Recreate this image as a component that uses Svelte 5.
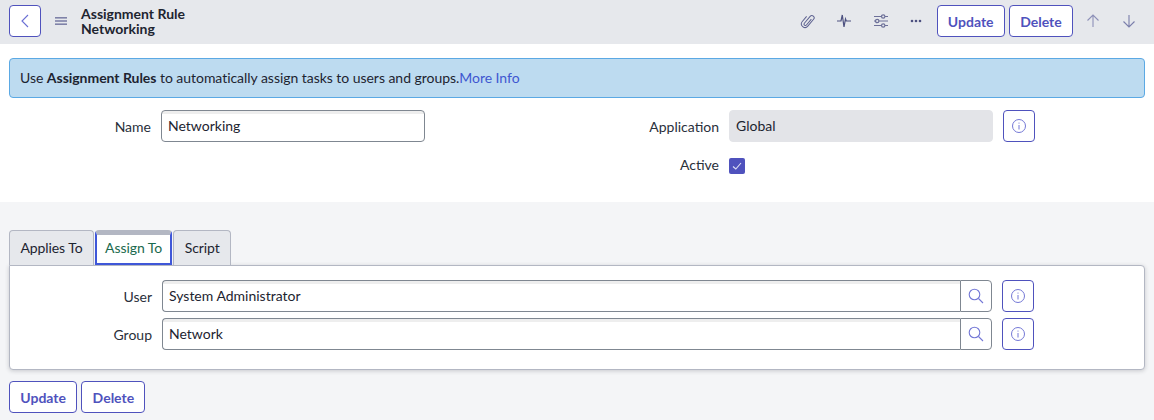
<!--
  Assignment rule form: header bar, info message, top fields, tabbed section, bottom actions.
-->
<script>
  const tabs = ['Applies To', 'Assign To', 'Script'];
  const refs = [
    { label: 'User', value: 'System Administrator' },
    { label: 'Group', value: 'Network' }
  ];
</script>

{#snippet info()}
  <button type="button" class="icon-btn" aria-label="Info">
    <svg width="16" height="16" viewBox="0 0 16 16" fill="none" stroke="#7478d6" stroke-width="1">
      <circle cx="8" cy="8" r="6.5" />
      <path d="M8 7v4.5M8 4.6v1" />
    </svg>
  </button>
{/snippet}

<div class="page">
  <header class="bar">
    <button type="button" class="icon-btn" aria-label="Back">
      <svg width="10" height="14" viewBox="0 0 10 14" fill="none" stroke="#6a6fd4" stroke-width="1.1">
        <path d="M8 1 2 7l6 6" />
      </svg>
    </button>
    <svg class="menu" width="12" height="8" viewBox="0 0 12 8" fill="#7f82a8">
      <rect width="12" height="1.6" /><rect y="3.2" width="12" height="1.6" /><rect y="6.4" width="12" height="1.6" />
    </svg>
    <div class="title">Assignment Rule<br />Networking</div>
    <div class="tools">
      <svg width="16" height="18" viewBox="0 0 16 18" fill="none" stroke="#5d6190" stroke-width="1.1">
        <path transform="rotate(40 8 9) translate(0.8 0.9) scale(0.9)" d="M9.500 5v8.500a1.500 1.500 0 0 1-3 0V3.500a2.500 2.500 0 0 1 5 0v10a4 4 0 0 1-8 0V6" />
      </svg>
      <svg width="16" height="16" viewBox="0 0 16 16" fill="none" stroke="#4d5180" stroke-width="1.2">
        <path d="M1 8h4l1.300-6 1.700 12 1.500-8 .8 2H15" />
      </svg>
      <svg width="16" height="14" viewBox="0 0 16 14" fill="none" stroke="#6d7099" stroke-width="1.2">
        <path d="M1 2.500h7.500M12 2.500h3M1 7h1.500M6 7h9M1 11.500h7.500M12 11.500h3" />
        <circle cx="10.200" cy="2.500" r="1.700" /><circle cx="4.200" cy="7" r="1.700" /><circle cx="10.200" cy="11.500" r="1.700" />
      </svg>
      <svg width="12" height="4" viewBox="0 0 12 4" fill="#4d5180">
        <circle cx="2" cy="2" r="1.300" /><circle cx="6" cy="2" r="1.300" /><circle cx="10" cy="2" r="1.300" />
      </svg>
    </div>
    <button type="button" class="btn">Update</button>
    <button type="button" class="btn">Delete</button>
    <svg class="arrow up" width="14" height="14" viewBox="0 0 14 14" fill="none" stroke="#8d90b8" stroke-width="1.100">
      <path d="M7 13V1M1.500 6.500 7 1l5.500 5.500" />
    </svg>
    <svg class="arrow" width="14" height="14" viewBox="0 0 14 14" fill="none" stroke="#7a7eab" stroke-width="1.100">
      <path d="M7 1v12M1.500 7.500 7 13l5.500-5.500" />
    </svg>
  </header>

  <section class="top">
    <div class="message">
      Use <b>Assignment Rules</b> to automatically assign tasks to users and groups.<a href="#more">More Info</a>
    </div>
    <div class="fields">
      <div class="col">
        <div class="row">
          <span class="label">Name</span>
          <div class="input">Networking</div>
        </div>
      </div>
      <div class="col">
        <div class="row">
          <span class="label">Application</span>
          <div class="input readonly">Global</div>
          {@render info()}
        </div>
        <div class="row check-row">
          <span class="label">Active</span>
          <span class="check">
            <svg width="12" height="12" viewBox="0 0 12 12" fill="none" stroke="#dfe0f5" stroke-width="1.100">
              <path d="M2 6.500 4.800 9 10 3" />
            </svg>
          </span>
        </div>
      </div>
    </div>
  </section>

  <section class="lower">
    <div class="tabs">
      {#each tabs as tab, i}
        <div class="tab" class:active={i === 1}>{tab}</div>
      {/each}
    </div>
    <div class="panel">
      {#each refs as ref}
        <div class="row ref">
          <span class="label">{ref.label}</span>
          <div class="input wide">{ref.value}</div>
          <button type="button" class="search" aria-label="Search">
            <svg width="16" height="16" viewBox="0 0 16 16" fill="none" stroke="#7478d6" stroke-width="1.100">
              <circle cx="6.500" cy="6.500" r="5.300" />
              <path d="m10.500 10.500 4.500 4.500" />
            </svg>
          </button>
          {@render info()}
        </div>
      {/each}
    </div>
    <div class="actions">
      <button type="button" class="btn">Update</button>
      <button type="button" class="btn">Delete</button>
    </div>
  </section>
</div>

<style>
  :global(body) {
    margin: 0;
    background: #f4f5f7;
  }
  .page {
    width: 1154px;
    height: 420px;
    overflow: hidden;
    font-family: Lato, sans-serif;
    font-size: 14px;
    color: #1d2430;
  }
  button {
    font-family: inherit;
    padding: 0;
    background: #fff;
    cursor: pointer;
  }
  .bar {
    height: 44px;
    box-sizing: border-box;
    display: flex;
    align-items: center;
    padding: 0 18px 2px 9px;
    background: #e6e8ec;
  }
  .icon-btn {
    width: 32px;
    height: 32px;
    flex: none;
    display: grid;
    place-items: center;
    border: 1px solid #4f52bd;
    border-radius: 4px;
  }
  .menu {
    margin-left: 14px;
    flex: none;
  }
  .title {
    margin-left: 14px;
    font-weight: 700;
    line-height: 15px;
    flex: 1;
  }
  .tools {
    display: flex;
    align-items: center;
    gap: 20.7px;
    margin-right: 15px;
  }
  .btn {
    height: 32px;
    box-sizing: border-box;
    padding: 0 10.3px;
    border: 1px solid #4f52bd;
    border-radius: 4px;
    color: #4f52bd;
    font-size: 14px;
    font-weight: 700;
  }
  .bar .btn + .btn {
    margin-left: 4px;
  }
  .arrow {
    flex: none;
    margin-left: 22px;
  }
  .up {
    margin-left: 13px;
  }
  .top {
    height: 158px;
    box-sizing: border-box;
    padding: 14px 9px 0;
    background: #fff;
  }
  .message {
    height: 40px;
    box-sizing: border-box;
    line-height: 38px;
    padding: 0 10px;
    letter-spacing: -0.04px;
    background: #bddbf0;
    border: 1px solid #5ba9e4;
    border-radius: 4px;
  }
  .message b {
    font-weight: 700;
  }
  .message a {
    color: #3f57d0;
    text-decoration: none;
  }
  .fields {
    display: flex;
    margin-top: 12px;
  }
  .col {
    width: 568px;
    flex: none;
  }
  .row {
    display: flex;
    align-items: center;
  }
  .label {
    flex: none;
    width: 142px;
    margin-right: 10px;
    text-align: right;
    color: #2a303b;
  }
  .input {
    width: 264px;
    height: 32px;
    box-sizing: border-box;
    display: flex;
    align-items: center;
    padding: 0 6px 2px;
    background: linear-gradient(#eeeeee 0 3px, #fff 3px);
    border: 1px solid #7f8791;
    border-radius: 4px;
  }
  .readonly {
    background: #e3e4e8;
    border-color: #e3e4e8;
  }
  .readonly + .icon-btn {
    margin-left: 10px;
  }
  .check-row {
    margin-top: 16px;
    height: 16px;
  }
  .check-row .label {
    margin-bottom: 3px;
  }
  .check {
    width: 16px;
    height: 16px;
    display: grid;
    place-items: center;
    background: #4f52bd;
    border-radius: 2px;
  }
  .lower {
    padding: 28px 9px 0;
  }
  .tabs {
    display: flex;
    height: 35px;
    align-items: stretch;
  }
  .tab {
    box-sizing: border-box;
    display: flex;
    align-items: center;
    justify-content: center;
    padding: 0 10.4px 2px;
    margin-right: 1px;
    letter-spacing: -0.08px;
    background: #e6e8ec;
    border: 1px solid #b3b7c3;
    border-bottom: none;
    border-radius: 4px 4px 0 0;
  }
  .tab.active {
    padding: 0 8.2px 4px;
    background: #fff;
    color: #1a6a4e;
    border: 2px solid #3f57d8;
    border-top: 5px solid #b3b7c3;
  }
  .panel {
    height: 105px;
    box-sizing: border-box;
    padding-top: 14px;
    background: #fff;
    border: 1px solid #b3b7c3;
    border-radius: 0 4px 4px 4px;
    box-shadow: 0 1px 4px rgba(40, 44, 60, 0.22);
  }
  .ref {
    margin-bottom: 6px;
  }
  .wide {
    width: 798px;
    border-right: none;
    border-radius: 4px 0 0 4px;
  }
  .search {
    width: 32px;
    height: 32px;
    margin-right: 10px;
    display: grid;
    place-items: center;
    border: 1px solid #7f8791;
    border-radius: 0 4px 4px 0;
  }
  .actions {
    display: flex;
    gap: 4px;
    margin-top: 11px;
  }
</style>
